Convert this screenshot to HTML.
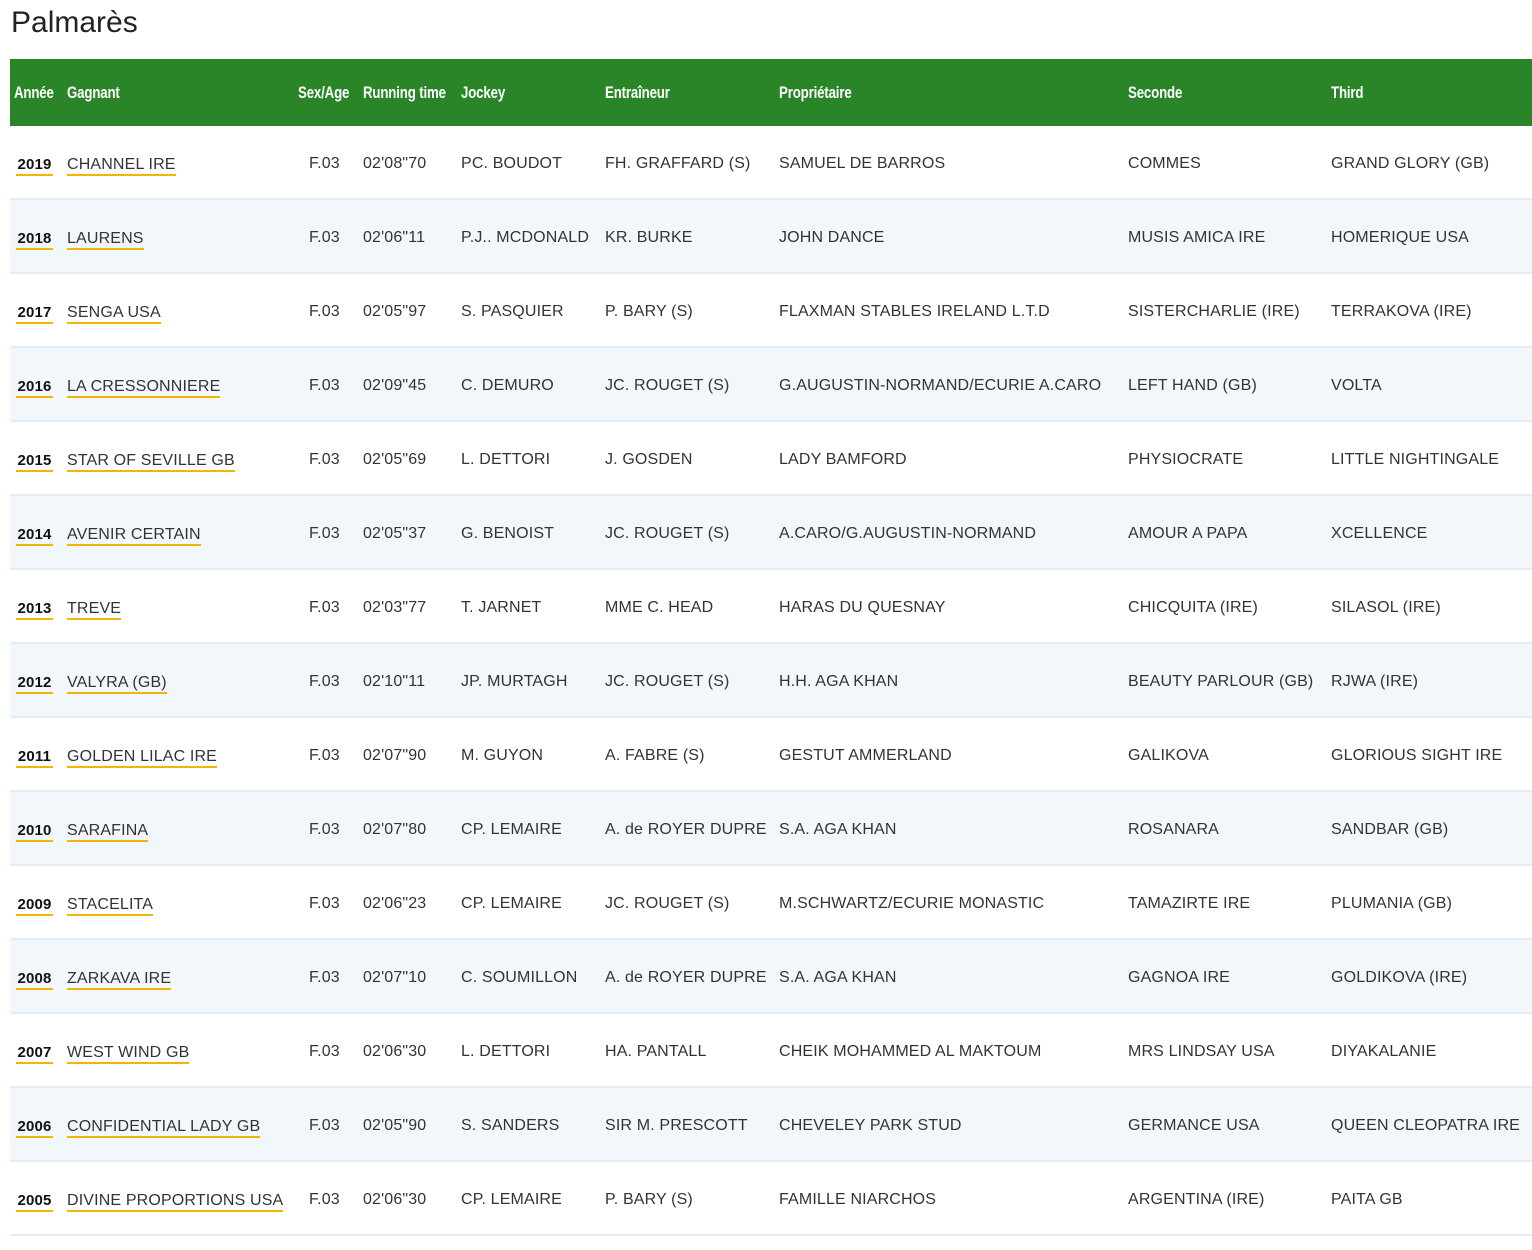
<!DOCTYPE html>
<html><head><meta charset="utf-8"><style>
body{margin:0;background:#fff;font-family:"Liberation Sans",sans-serif;color:#333;width:1532px;height:1250px;overflow:hidden;position:relative}
h1{position:absolute;left:11px;top:6px;margin:0;font-weight:400;font-size:30px;color:#222}
.hd{position:absolute;left:10px;top:59px;width:1522px;height:67px;background:#2a8528;color:#fff}
.hd span{position:absolute;top:24px;font-weight:700;font-size:17px;transform:scaleX(.78);transform-origin:left;letter-spacing:-.2px;white-space:nowrap}
.r{position:absolute;left:10px;width:1522px;height:72px;border-bottom:2px solid #e4edf5}
.r.a{background:#f2f7fb}
.r span{position:absolute;top:29px;font-size:16px;white-space:nowrap;letter-spacing:.15px}
.r .y{font-weight:700;color:#111;border-bottom:2px solid #f5b400;line-height:19px;left:6px;width:37px;text-align:center;font-size:15px}
.r .w{left:57px;border-bottom:2px solid #f5b400;line-height:19px}
.c3{left:299px}.c4{left:353px}.c5{left:451px}.c6{left:595px}.c7{left:769px}.c8{left:1118px}.c9{left:1321px}
</style></head><body>
<h1>Palmarès</h1>
<div class="hd"><span style="left:4px">Année</span><span style="left:57px">Gagnant</span><span style="left:288px">Sex/Age</span><span style="left:353px">Running time</span><span style="left:451px">Jockey</span><span style="left:595px">Entraîneur</span><span style="left:769px">Propriétaire</span><span style="left:1118px">Seconde</span><span style="left:1321px">Third</span></div>

<div class="r" style="top:126px"><span class="y">2019</span><span class="w">CHANNEL IRE</span><span class="c3">F.03</span><span class="c4">02'08"70</span><span class="c5">PC. BOUDOT</span><span class="c6">FH. GRAFFARD (S)</span><span class="c7">SAMUEL DE BARROS</span><span class="c8">COMMES</span><span class="c9">GRAND GLORY (GB)</span></div>
<div class="r a" style="top:200px"><span class="y">2018</span><span class="w">LAURENS</span><span class="c3">F.03</span><span class="c4">02'06"11</span><span class="c5">P.J.. MCDONALD</span><span class="c6">KR. BURKE</span><span class="c7">JOHN DANCE</span><span class="c8">MUSIS AMICA IRE</span><span class="c9">HOMERIQUE USA</span></div>
<div class="r" style="top:274px"><span class="y">2017</span><span class="w">SENGA USA</span><span class="c3">F.03</span><span class="c4">02'05"97</span><span class="c5">S. PASQUIER</span><span class="c6">P. BARY (S)</span><span class="c7">FLAXMAN STABLES IRELAND L.T.D</span><span class="c8">SISTERCHARLIE (IRE)</span><span class="c9">TERRAKOVA (IRE)</span></div>
<div class="r a" style="top:348px"><span class="y">2016</span><span class="w">LA CRESSONNIERE</span><span class="c3">F.03</span><span class="c4">02'09"45</span><span class="c5">C. DEMURO</span><span class="c6">JC. ROUGET (S)</span><span class="c7">G.AUGUSTIN-NORMAND/ECURIE A.CARO</span><span class="c8">LEFT HAND (GB)</span><span class="c9">VOLTA</span></div>
<div class="r" style="top:422px"><span class="y">2015</span><span class="w">STAR OF SEVILLE GB</span><span class="c3">F.03</span><span class="c4">02'05"69</span><span class="c5">L. DETTORI</span><span class="c6">J. GOSDEN</span><span class="c7">LADY BAMFORD</span><span class="c8">PHYSIOCRATE</span><span class="c9">LITTLE NIGHTINGALE</span></div>
<div class="r a" style="top:496px"><span class="y">2014</span><span class="w">AVENIR CERTAIN</span><span class="c3">F.03</span><span class="c4">02'05"37</span><span class="c5">G. BENOIST</span><span class="c6">JC. ROUGET (S)</span><span class="c7">A.CARO/G.AUGUSTIN-NORMAND</span><span class="c8">AMOUR A PAPA</span><span class="c9">XCELLENCE</span></div>
<div class="r" style="top:570px"><span class="y">2013</span><span class="w">TREVE</span><span class="c3">F.03</span><span class="c4">02'03"77</span><span class="c5">T. JARNET</span><span class="c6">MME C. HEAD</span><span class="c7">HARAS DU QUESNAY</span><span class="c8">CHICQUITA (IRE)</span><span class="c9">SILASOL (IRE)</span></div>
<div class="r a" style="top:644px"><span class="y">2012</span><span class="w">VALYRA (GB)</span><span class="c3">F.03</span><span class="c4">02'10"11</span><span class="c5">JP. MURTAGH</span><span class="c6">JC. ROUGET (S)</span><span class="c7">H.H. AGA KHAN</span><span class="c8">BEAUTY PARLOUR (GB)</span><span class="c9">RJWA (IRE)</span></div>
<div class="r" style="top:718px"><span class="y">2011</span><span class="w">GOLDEN LILAC IRE</span><span class="c3">F.03</span><span class="c4">02'07"90</span><span class="c5">M. GUYON</span><span class="c6">A. FABRE (S)</span><span class="c7">GESTUT AMMERLAND</span><span class="c8">GALIKOVA</span><span class="c9">GLORIOUS SIGHT IRE</span></div>
<div class="r a" style="top:792px"><span class="y">2010</span><span class="w">SARAFINA</span><span class="c3">F.03</span><span class="c4">02'07"80</span><span class="c5">CP. LEMAIRE</span><span class="c6">A. de ROYER DUPRE</span><span class="c7">S.A. AGA KHAN</span><span class="c8">ROSANARA</span><span class="c9">SANDBAR (GB)</span></div>
<div class="r" style="top:866px"><span class="y">2009</span><span class="w">STACELITA</span><span class="c3">F.03</span><span class="c4">02'06"23</span><span class="c5">CP. LEMAIRE</span><span class="c6">JC. ROUGET (S)</span><span class="c7">M.SCHWARTZ/ECURIE MONASTIC</span><span class="c8">TAMAZIRTE IRE</span><span class="c9">PLUMANIA (GB)</span></div>
<div class="r a" style="top:940px"><span class="y">2008</span><span class="w">ZARKAVA IRE</span><span class="c3">F.03</span><span class="c4">02'07"10</span><span class="c5">C. SOUMILLON</span><span class="c6">A. de ROYER DUPRE</span><span class="c7">S.A. AGA KHAN</span><span class="c8">GAGNOA IRE</span><span class="c9">GOLDIKOVA (IRE)</span></div>
<div class="r" style="top:1014px"><span class="y">2007</span><span class="w">WEST WIND GB</span><span class="c3">F.03</span><span class="c4">02'06"30</span><span class="c5">L. DETTORI</span><span class="c6">HA. PANTALL</span><span class="c7">CHEIK MOHAMMED AL MAKTOUM</span><span class="c8">MRS LINDSAY USA</span><span class="c9">DIYAKALANIE</span></div>
<div class="r a" style="top:1088px"><span class="y">2006</span><span class="w">CONFIDENTIAL LADY GB</span><span class="c3">F.03</span><span class="c4">02'05"90</span><span class="c5">S. SANDERS</span><span class="c6">SIR M. PRESCOTT</span><span class="c7">CHEVELEY PARK STUD</span><span class="c8">GERMANCE USA</span><span class="c9">QUEEN CLEOPATRA IRE</span></div>
<div class="r" style="top:1162px"><span class="y">2005</span><span class="w">DIVINE PROPORTIONS USA</span><span class="c3">F.03</span><span class="c4">02'06"30</span><span class="c5">CP. LEMAIRE</span><span class="c6">P. BARY (S)</span><span class="c7">FAMILLE NIARCHOS</span><span class="c8">ARGENTINA (IRE)</span><span class="c9">PAITA GB</span></div>
</body></html>
